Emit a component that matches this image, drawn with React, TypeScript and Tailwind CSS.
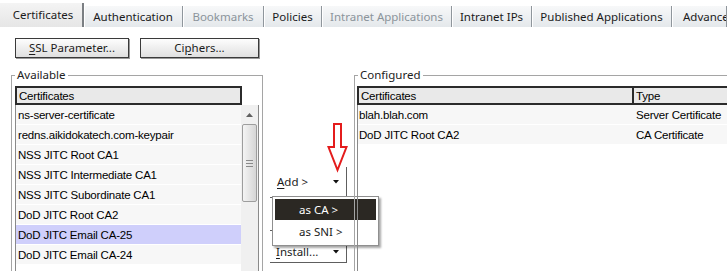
import React from "react";

type Tab = { label: string; w: string; sel?: boolean; dis?: boolean };

const tabs: Tab[] = [
  { label: "Certificates", w: "w-[84px]", sel: true },
  { label: "Authentication", w: "w-[99px]" },
  { label: "Bookmarks", w: "w-[81px]", dis: true },
  { label: "Policies", w: "w-[58px]" },
  { label: "Intranet Applications", w: "w-[130px]", dis: true },
  { label: "Intranet IPs", w: "w-[80px]" },
  { label: "Published Applications", w: "w-[140px]" },
  { label: "Advanced", w: "flex-1" },
];

const available = [
  "ns-server-certificate",
  "redns.aikidokatech.com-keypair",
  "NSS JITC Root CA1",
  "NSS JITC Intermediate CA1",
  "NSS JITC Subordinate CA1",
  "DoD JITC Root CA2",
  "DoD JITC Email CA-25",
  "DoD JITC Email CA-24",
];

const configured = [
  ["blah.blah.com", "Server Certificate"],
  ["DoD JITC Root CA2", "CA Certificate"],
];

function DropTri() {
  return (
    <svg width="6" height="4" viewBox="0 0 6 4" className="shrink-0">
      <path d="M0 0 H6 L3 3.5 Z" fill="#111" />
    </svg>
  );
}

function Btn({ w, children }: { w: string; children: React.ReactNode }) {
  return (
    <div
      className={`${w} h-[20px] flex items-center justify-center border border-[#3a3a3a] bg-linear-to-b from-[#fdfdfd] to-[#e0e0e0] shadow-[1px_1px_0_#9a9a9a] leading-[16px]`}
    >
      {children}
    </div>
  );
}

export default function App() {
  return (
    <div className="w-[727px] h-[271px] overflow-hidden bg-white relative font-['Noto_Sans',sans-serif] text-[11.5px] text-[#1b1b1b]">
      {/* Tabs */}
      <div className="flex items-end h-[27px] w-[727px]">
        {tabs.map((t) =>
          t.sel ? (
            <div
              key={t.label}
              className={`${t.w} h-[24px] shrink-0 flex items-center justify-center pl-[4px] bg-linear-to-b from-[#f4f4f4] to-[#e6e6e6] border-r-2 border-[#7b7f83] leading-[16px] whitespace-nowrap`}
            >
              {t.label}
            </div>
          ) : (
            <div
              key={t.label}
              className={`${t.w} h-[21px] flex items-center pt-[1px] ${t.label === "Advanced" ? "justify-start pl-[11px] min-w-0" : "justify-center shrink-0"} bg-linear-to-b from-[#f7f8f9] to-[#e4e8eb] border-r border-[#8f969c] shadow-[inset_1px_0_0_#ffffff] leading-[16px] whitespace-nowrap overflow-hidden ${t.dis ? "text-[#8b949b]" : "text-[#1b1b1b]"}`}
            >
              {t.label}
            </div>
          )
        )}
      </div>

      {/* Buttons */}
      <div className="flex gap-[11px] ml-[15px] mt-[11px]">
        <Btn w="w-[114px]">
          <span>
            <span className="underline underline-offset-2">S</span>SL Parameter...
          </span>
        </Btn>
        <Btn w="w-[119px]">
          <span>
            Ci<span className="underline underline-offset-2">p</span>hers...
          </span>
        </Btn>
      </div>

      {/* Groups */}
      <div className="flex mt-[17px]">
        {/* Available */}
        <div className="ml-[11px] w-[252px] h-[200px] shrink-0 border-t border-l border-r border-[#a5a5a5] relative">
          <span className="absolute -top-[8px] left-[3px] bg-white px-[2px] leading-[14px] text-[#222]">
            Available
          </span>
          <div className="mt-[10px] ml-[3px] w-[244px] flex flex-col font-['Liberation_Sans',Arial,sans-serif] text-[11.5px] tracking-[-0.2px] text-black">
            <div className="flex h-[19px]">
              <div className="w-[227px] h-[19px] border-2 border-[#2b2b2b] bg-[#e9e9e9] pl-[2px] flex items-center leading-[14px]">
                Certificates
              </div>
            </div>
            <div className="flex border-l border-r border-[#8a8a8a] h-[170px]">
              <div className="w-[225px] flex flex-col">
                {available.map((a, i) => (
                  <div
                    key={a}
                    className={`h-[20px] shrink-0 border-b border-white pl-[2px] flex items-center leading-[14px] ${i === 6 ? "bg-[#cfcffb]" : "bg-[#f7f7f7]"}`}
                  >
                    {a}
                  </div>
                ))}
              </div>
              <div className="w-[17px] bg-[#f0f0f0] flex flex-col items-center">
                <div className="h-[17px] w-[17px] flex items-center justify-center pt-[2px]">
                  <svg width="7" height="4" viewBox="0 0 7 4">
                    <path d="M0 4 L3.5 0 L7 4 Z" fill="#606060" />
                  </svg>
                </div>
                <div className="mt-[2px] w-[15px] h-[78px] rounded-[2px] border border-[#9d9d9d] bg-linear-to-r from-[#f4f4f4] to-[#d6d6d6] flex flex-col items-center justify-center gap-[2px]">
                  <div className="w-[7px] h-[1px] bg-[#8a8a8a]" />
                  <div className="w-[7px] h-[1px] bg-[#8a8a8a]" />
                  <div className="w-[7px] h-[1px] bg-[#8a8a8a]" />
                </div>
              </div>
            </div>
          </div>
        </div>

        {/* Middle */}
        <div className="w-[91px] shrink-0 relative">
          <div className="mt-[92px] ml-[7px] w-[77px] flex flex-col">
            <div className="h-[30px] border-r border-[#5e5e5e] flex items-center justify-between pl-[7px] pr-[7px] leading-[16px]">
              <span>
                <span className="underline underline-offset-2">A</span>dd &gt;
              </span>
              <DropTri />
            </div>
            <div className="h-[33px] border-t border-r border-[#5e5e5e]" />
            <div className="h-[33px] border-t border-r border-b border-[#5e5e5e] flex items-start justify-between pt-[13px] pl-[6px] pr-[7px] leading-[16px]">
              <span>
                <span className="underline underline-offset-2">I</span>nstall...
              </span>
              <span className="pt-[6px]">
                <DropTri />
              </span>
            </div>
          </div>

          {/* Red annotation arrow */}
          <svg
            className="absolute left-[64px] top-[46px]"
            width="22"
            height="52"
            viewBox="-1 -1 22 52"
          >
            <path
              d="M6 2 H13 V25 H18.5 L9.5 48 L0.5 25 H6 Z"
              fill="#ffffff"
              stroke="#e41c1c"
              strokeWidth="2"
              strokeLinejoin="miter"
            />
          </svg>

          {/* Popup menu */}
          <div className="absolute left-[9px] top-[121px] w-[107px] h-[50px] bg-white border border-[#8f8f8f] shadow-[2px_2px_2px_rgba(0,0,0,0.35)] p-[2px] flex flex-col">
            <div className="h-[21px] bg-[#2b2823] text-white flex items-center pl-[24px] leading-[16px]">
              as CA &gt;
            </div>
            <div className="h-[23px] flex items-center pl-[24px] leading-[16px]">
              as SNI &gt;
            </div>
          </div>
        </div>

        {/* Configured */}
        <div className="w-[400px] h-[200px] shrink-0 border-t border-l border-[#a5a5a5] relative">
          <span className="absolute -top-[8px] left-[3px] bg-white px-[2px] leading-[14px] text-[#222]">
            Configured
          </span>
          <div className="mt-[10px] ml-[2px] flex flex-col font-['Liberation_Sans',Arial,sans-serif] text-[11.5px] tracking-[-0.2px] text-black">
            <div className="flex h-[19px]">
              <div className="w-[277px] h-[19px] border-2 border-[#2b2b2b] bg-[#e9e9e9] pl-[2px] flex items-center leading-[14px]">
                Certificates
              </div>
              <div className="w-[120px] h-[19px] border-y-2 border-r-2 border-[#2b2b2b] bg-[#e9e9e9] pl-[2px] flex items-center leading-[14px]">
                Type
              </div>
            </div>
            <div className="flex flex-col border-l border-[#8a8a8a] h-[170px]">
              {configured.map(([c, t]) => (
                <div
                  key={c}
                  className="h-[20px] shrink-0 flex border-b border-white bg-[#f7f7f7] leading-[14px]"
                >
                  <div className="w-[276px] pl-[1px] flex items-center">{c}</div>
                  <div className="pl-[2px] flex items-center">{t}</div>
                </div>
              ))}
            </div>
          </div>
        </div>
      </div>
    </div>
  );
}
